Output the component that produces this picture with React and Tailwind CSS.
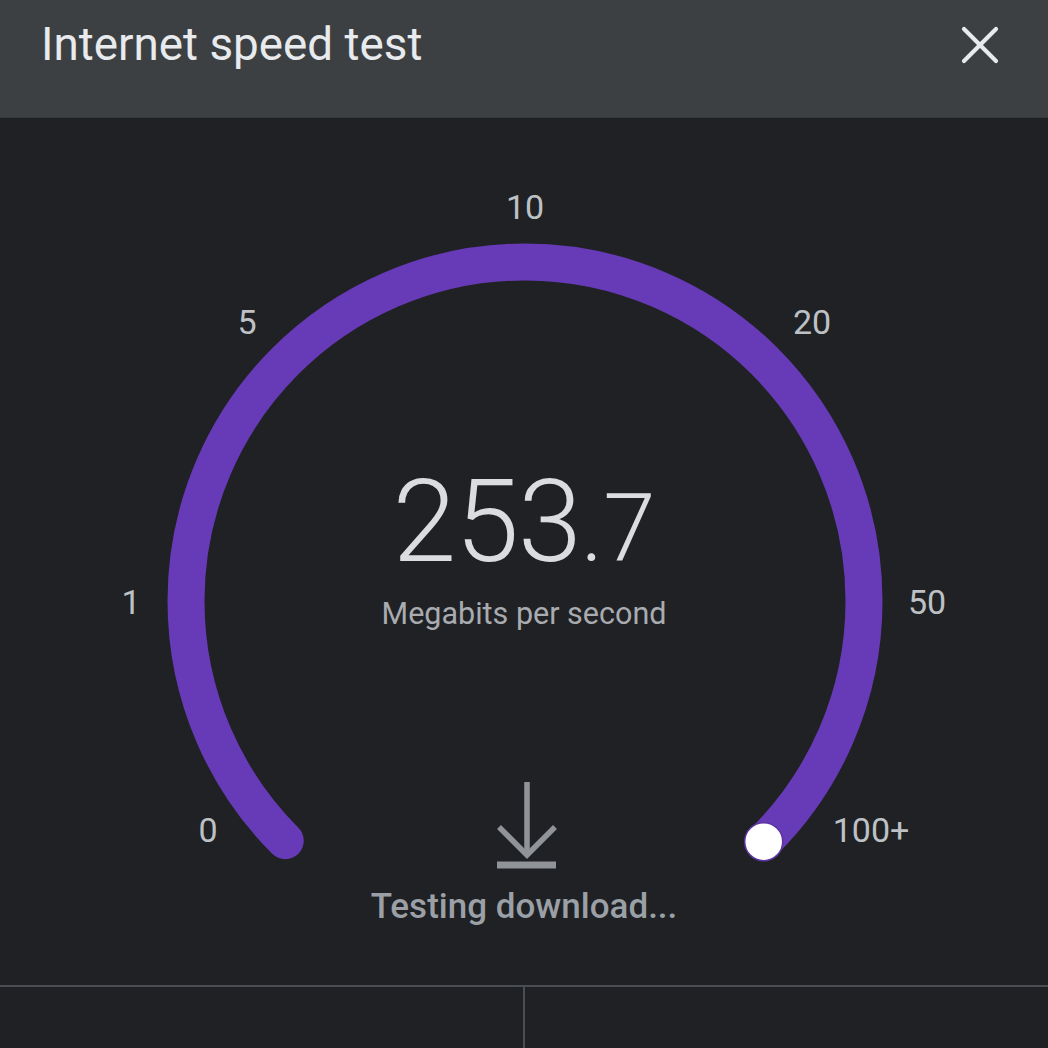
import React from "react";

const font = { fontFamily: "Roboto, 'Noto Sans', sans-serif" };

export default function App() {
  const cx = 525;
  const cy = 483;
  const r = 339;
  const d = r * Math.SQRT1_2;
  const sx = cx - d;
  const sy = cy + d;
  const ex = cx + d;
  const ey = cy + d;
  const labels = [
    { t: "10", x: 525, y: 89 },
    { t: "5", x: 247, y: 204 },
    { t: "20", x: 812, y: 204 },
    { t: "1", x: 131, y: 484 },
    { t: "50", x: 927, y: 484 },
    { t: "0", x: 208, y: 712 },
    { t: "100+", x: 871, y: 712 },
  ];
  return (
    <div
      className="w-[1048px] h-[1048px] bg-[#202124] flex flex-col overflow-hidden"
      style={font}
    >
      <div className="h-[118px] shrink-0 bg-[#3c4043] flex items-start justify-between pl-[41px] pr-[48px] pt-[17px] border-b border-[#35383b]">
        <div className="text-[45.8px] leading-[56px] text-[#e8eaed]">
          Internet speed test
        </div>
        <svg width="40" height="40" viewBox="0 0 40 40" className="mt-[8px]">
          <path
            d="M4 4 L36 36 M36 4 L4 36"
            stroke="#e8eaed"
            strokeWidth="4.2"
            strokeLinecap="round"
          />
        </svg>
      </div>
      <div className="relative h-[867px] shrink-0">
        <svg
          className="absolute inset-0"
          width="1048"
          height="867"
          viewBox="0 0 1048 867"
        >
          <path
            d={`M ${sx} ${sy} A ${r} ${r} 0 1 1 ${ex} ${ey}`}
            fill="none"
            stroke="#673ab7"
            strokeWidth="37"
            strokeLinecap="round"
          />
          <circle cx={ex - 1} cy={ey + 1} r="19" fill="#ffffff" stroke="#5b34a0" strokeWidth="1.5" />
          {labels.map((l) => (
            <text
              key={l.t}
              x={l.x}
              y={l.y}
              textAnchor="middle"
              dominantBaseline="central"
              fill="#bdc1c6"
              fontSize="34"
              fontFamily="Roboto, sans-serif"
            >
              {l.t}
            </text>
          ))}
          <g stroke="#909499" strokeWidth="5.5" fill="none">
            <path d="M527 664 L527 734" />
            <path d="M499 709 L527 737 L555 709" />
            <path d="M497 747 L556 747" strokeWidth="7" />
          </g>
        </svg>
        <div className="absolute left-0 right-0 top-[346px] flex flex-col items-center">
          <div className="flex items-baseline text-[#dadce0] font-light leading-none">
            <span className="text-[115px] tracking-[-1px]">253</span>
            <span className="text-[94px]">.7</span>
          </div>
          <div className="text-[30.5px] text-[#a8abb0] mt-[20px] leading-none">
            Megabits per second
          </div>
        </div>
        <div className="absolute left-0 right-0 top-[771px] flex justify-center">
          <div className="text-[35px] font-medium text-[#9aa0a6] leading-none">
            Testing download...
          </div>
        </div>
      </div>
      <div className="flex-1 border-t-2 border-[#4a4d51] flex">
        <div className="flex-1 border-r-2 border-[#4a4d51]" />
        <div className="flex-1" />
      </div>
    </div>
  );
}
